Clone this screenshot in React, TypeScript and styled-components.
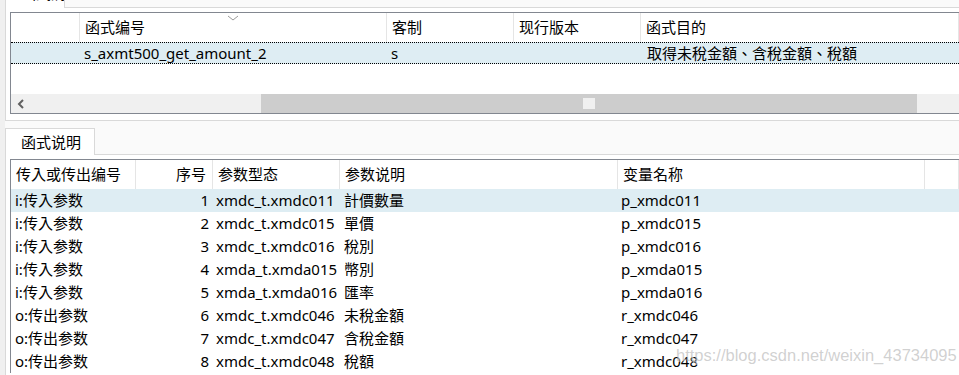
import React from 'react'
import styled, { createGlobalStyle } from 'styled-components'

const GlobalStyle = createGlobalStyle`
  body {
    margin: 0;
    background: #f0f0f0;
    font-family: 'Noto Sans', 'Noto Sans CJK TC', sans-serif;
    font-size: 15px;
    color: #000000;
  }
`
const Screen = styled.div`
  position: relative;
  width: 959px;
  height: 375px;
  overflow: hidden;
  box-sizing: border-box;
  padding-left: 5px;
  display: flex;
  flex-direction: column;
`
const TabStrip = styled.div<{ $h: number }>`
  display: flex;
  align-items: flex-end;
  height: ${(p) => p.$h}px;
  flex-shrink: 0;
  background: #fafafa;
  border-bottom: 1px solid #d9d9d9;
`
const Tab = styled.div<{ $w: number; $lh: number }>`
  width: ${(p) => p.$w}px;
  height: 27px;
  flex-shrink: 0;
  box-sizing: border-box;
  margin-bottom: -1px;
  background: #ffffff;
  border: 1px solid #d9d9d9;
  border-bottom: none;
  padding-left: 15px;
  line-height: ${(p) => p.$lh}px;
  white-space: nowrap;
  overflow: hidden;
`
const Panel = styled.div<{ $grow?: boolean }>`
  background: #ffffff;
  border-left: 1px solid #d9d9d9;
  padding: 4px 0 6px 4px;
  flex-shrink: 0;
  ${(p) => (p.$grow ? 'flex: 1; padding-bottom: 0;' : 'border-bottom: 1px solid #d9d9d9;')}
`
const Grid = styled.div`
  border-top: 1px solid #828790;
  border-left: 1px solid #828790;
  border-bottom: 1px solid #828790;
  background: #ffffff;
`
const OpenGrid = styled(Grid)`
  border-bottom: none;
`
const HeadRow = styled.div<{ $cols: string }>`
  display: grid;
  grid-template-columns: ${(p) => p.$cols};
  height: 29px;
`
const HeadCell = styled.div<{ $right?: boolean }>`
  position: relative;
  border-right: 1px solid #e5e5e5;
  padding: 0 6px 0 5px;
  line-height: 29px;
  white-space: nowrap;
  overflow: hidden;
  text-align: ${(p) => (p.$right ? 'right' : 'left')};
`
const SortMark = styled.svg`
  position: absolute;
  top: 2px;
  left: 50%;
  margin-left: -6px;
`
const Row = styled.div<{ $cols: string; $selected?: boolean }>`
  display: grid;
  grid-template-columns: ${(p) => p.$cols};
  height: 23px;
  line-height: 23px;
  background: ${(p) => (p.$selected ? '#deedf3' : '#ffffff')};
`
const FocusRow = styled(Row)`
  box-sizing: border-box;
  height: 22px;
  line-height: 20px;
  border-top: 1px dotted #000000;
  border-bottom: 1px dotted #000000;
`
const Cell = styled.div<{ $right?: boolean; $pad?: number }>`
  padding: 0 4px 0 ${(p) => p.$pad ?? 4}px;
  white-space: nowrap;
  overflow: hidden;
  text-align: ${(p) => (p.$right ? 'right' : 'left')};
`
const Blank = styled.div`
  height: 30px;
`
const HScroll = styled.div`
  display: grid;
  grid-template-columns: 250px 656px 1fr;
  height: 19px;
  background: #f0f0f0;
`
const ArrowBtn = styled.div`
  display: flex;
  align-items: center;
  padding-left: 6px;
`
const Thumb = styled.div`
  background: #cdcdcd;
  display: flex;
  align-items: center;
  justify-content: center;
`
const Grip = styled.div`
  width: 12px;
  height: 11px;
  background: #f0f0f0;
`
const Watermark = styled.div`
  position: absolute;
  left: 676px;
  top: 346px;
  font-family: 'Liberation Sans', Arial, sans-serif;
  font-size: 16.5px;
  color: rgba(170, 170, 170, 0.55);
  text-shadow: 1px 1px 0 rgba(255, 255, 255, 0.6);
  white-space: nowrap;
`

const topCols = '69px 307px 127px 127px 1fr'
const bottomCols = '125px 77px 127px 278px 307px 1fr'

const params = [
  ['i:传入参数', '1', 'xmdc_t.xmdc011', '計價數量', 'p_xmdc011'],
  ['i:传入参数', '2', 'xmdc_t.xmdc015', '單價', 'p_xmdc015'],
  ['i:传入参数', '3', 'xmdc_t.xmdc016', '稅別', 'p_xmdc016'],
  ['i:传入参数', '4', 'xmda_t.xmda015', '幣別', 'p_xmda015'],
  ['i:传入参数', '5', 'xmda_t.xmda016', '匯率', 'p_xmda016'],
  ['o:传出参数', '6', 'xmdc_t.xmdc046', '未稅金額', 'r_xmdc046'],
  ['o:传出参数', '7', 'xmdc_t.xmdc047', '含稅金額', 'r_xmdc047'],
  ['o:传出参数', '8', 'xmdc_t.xmdc048', '稅額', 'r_xmdc048'],
]

export default function App() {
  return (
    <Screen>
      <GlobalStyle />
      <TabStrip $h={7}>
        <Tab $w={60} $lh={22}>函式清單</Tab>
      </TabStrip>
      <Panel>
        <Grid>
          <HeadRow $cols={topCols}>
            <HeadCell />
            <HeadCell>
              <SortMark width='12' height='6' viewBox='0 0 12 6'>
                <path d='M1 1 L6 5 L11 1' fill='none' stroke='#9a9a9a' strokeWidth='1' />
              </SortMark>
              函式编号
            </HeadCell>
            <HeadCell>客制</HeadCell>
            <HeadCell>现行版本</HeadCell>
            <HeadCell>函式目的</HeadCell>
          </HeadRow>
          <FocusRow $cols={topCols} $selected>
            <Cell />
            <Cell>s_axmt500_get_amount_2</Cell>
            <Cell>s</Cell>
            <Cell />
            <Cell $pad={6}>取得未稅金額、含稅金額、稅額</Cell>
          </FocusRow>
          <Blank />
          <HScroll>
            <ArrowBtn>
              <svg width='8' height='10' viewBox='0 0 8 10'>
                <path d='M6 1 L2 5 L6 9' fill='none' stroke='#606060' strokeWidth='2' />
              </svg>
            </ArrowBtn>
            <Thumb>
              <Grip />
            </Thumb>
            <div />
          </HScroll>
        </Grid>
      </Panel>
      <TabStrip $h={33}>
        <Tab $w={90} $lh={27}>函式说明</Tab>
      </TabStrip>
      <Panel $grow>
        <OpenGrid>
          <HeadRow $cols={bottomCols}>
            <HeadCell>传入或传出编号</HeadCell>
            <HeadCell $right>序号</HeadCell>
            <HeadCell>参数型态</HeadCell>
            <HeadCell>参数说明</HeadCell>
            <HeadCell>变量名称</HeadCell>
            <HeadCell />
          </HeadRow>
          {params.map((p, i) => (
            <Row key={p[1]} $cols={bottomCols} $selected={i === 0}>
              <Cell>{p[0]}</Cell>
              <Cell $right>{p[1]}</Cell>
              <Cell $pad={3}>{p[2]}</Cell>
              <Cell>{p[3]}</Cell>
              <Cell $pad={3}>{p[4]}</Cell>
              <Cell />
            </Row>
          ))}
        </OpenGrid>
      </Panel>
      <Watermark>https://blog.csdn.net/weixin_43734095</Watermark>
    </Screen>
  )
}
